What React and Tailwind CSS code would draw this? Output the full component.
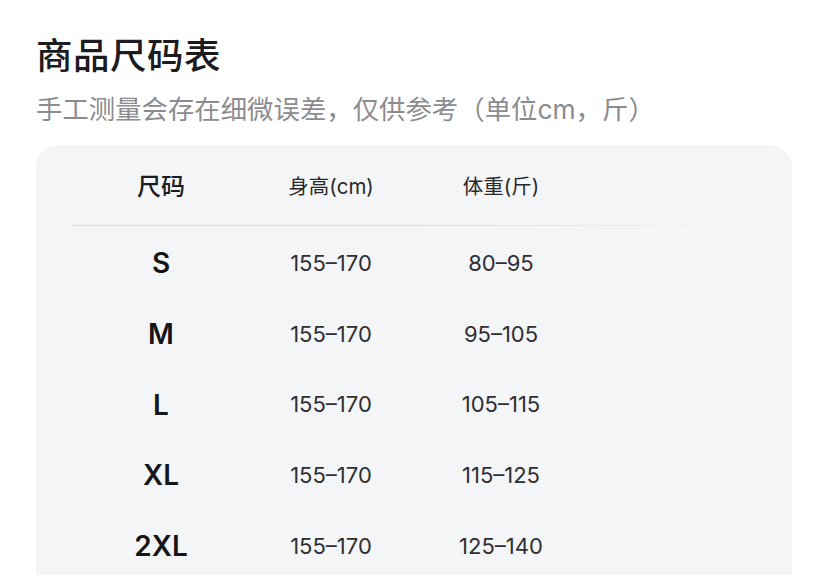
import React from 'react';

const rows = [
  { size: 'S', height: '155–170', weight: '80–95' },
  { size: 'M', height: '155–170', weight: '95–105' },
  { size: 'L', height: '155–170', weight: '105–115' },
  { size: 'XL', height: '155–170', weight: '115–125' },
  { size: '2XL', height: '155–170', weight: '125–140' },
];

export default function App() {
  return (
    <div className="h-[575px] w-[828px] overflow-hidden bg-white font-['Inter','Noto_Sans_CJK_SC',sans-serif]">
      <div className="px-[36px] pt-[30px]">
        <h1 className="text-[36.5px] leading-[52px] font-medium text-[#1b1b20] tracking-[0.5px]">
          商品尺码表
        </h1>
        <p className="mt-[9px] text-[26.4px] leading-[36px] text-[#8c8c90]">
          手工测量会存在细微误差，仅供参考（单位cm，斤）
        </p>

        <div className="mt-[18px] rounded-[22px] bg-[#f4f5f7] pb-[20px]">
          {/* header */}
          <div className="grid grid-cols-[170px_170px_170px] pl-[40px] h-[80px] items-center pt-[4px]">
            <span className="text-center text-[24px] font-medium text-[#1b1b20]">尺码</span>
            <span className="text-center text-[20.5px] text-[#2a2a2e]">身高(cm)</span>
            <span className="text-center text-[20.5px] text-[#2a2a2e]">体重(斤)</span>
          </div>
          <div className="ml-[35px] mr-[33px] h-px bg-gradient-to-r from-[#dcdde1] via-[#dcdde1] to-transparent" />

          {/* rows */}
          <div className="pt-[2px]">
            {rows.map((r) => (
              <div
                key={r.size}
                className="grid grid-cols-[170px_170px_170px] pl-[40px] h-[70.7px] items-center"
              >
                <span className="text-center text-[28px] font-semibold text-[#16161a]">{r.size}</span>
                <span className="text-center text-[22px] text-[#2e2e33]">{r.height}</span>
                <span className="text-center text-[22px] text-[#2e2e33]">{r.weight}</span>
              </div>
            ))}
          </div>
        </div>
      </div>
    </div>
  );
}
